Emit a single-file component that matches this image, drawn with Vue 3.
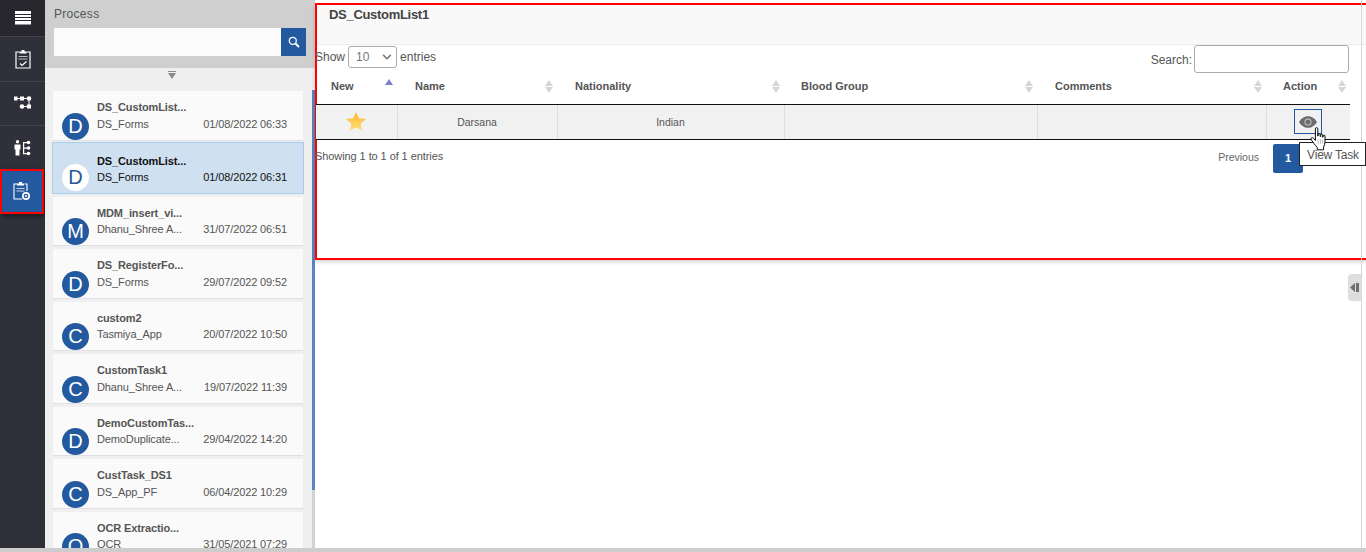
<script setup>
const processes = [
  { letter: 'D', title: 'DS_CustomList...', app: 'DS_Forms', date: '01/08/2022 06:33' },
  { letter: 'D', title: 'DS_CustomList...', app: 'DS_Forms', date: '01/08/2022 06:31', active: true },
  { letter: 'M', title: 'MDM_insert_vi...', app: 'Dhanu_Shree A...', date: '31/07/2022 06:51' },
  { letter: 'D', title: 'DS_RegisterFo...', app: 'DS_Forms', date: '29/07/2022 09:52' },
  { letter: 'C', title: 'custom2', app: 'Tasmiya_App', date: '20/07/2022 10:50' },
  { letter: 'C', title: 'CustomTask1', app: 'Dhanu_Shree A...', date: '19/07/2022 11:39' },
  { letter: 'D', title: 'DemoCustomTas...', app: 'DemoDuplicate...', date: '29/04/2022 14:20' },
  { letter: 'C', title: 'CustTask_DS1', app: 'DS_App_PF', date: '06/04/2022 10:29' },
  { letter: 'O', title: 'OCR Extractio...', app: 'OCR', date: '31/05/2021 07:29' }
]

const columns = ['Name', 'Nationality', 'Blood Group', 'Comments', 'Action']
</script>

<template>
  <div class="page">
    <div class="shell">
      <nav class="rail">
        <div class="rail-top">
          <svg width="16" height="14" viewBox="0 0 16 14"><path fill="#fff" d="M0 0h16v3H0zM0 4h16v2H0zM0 7h16v2H0zM0 10h16v3.500H0z" /></svg>
        </div>
        <div class="rail-item">
          <svg width="16" height="20" viewBox="0 0 16 20" fill="none" stroke="#fff" stroke-width="1.200">
            <path d="M4.500 3H1v16h14V3h-3.500" />
            <path d="M4.500 4.500V2.500H6.500V1h3v1.500h2v2z" fill="#fff" stroke="none" />
            <path d="M3.500 7.500h9M3.500 10h9" stroke="#bbb" />
            <path d="M5 14.500l2 2 4.500-4" />
          </svg>
        </div>
        <div class="rail-item">
          <svg width="18" height="14" viewBox="0 0 18 14" fill="#fff">
            <rect x="0" y="0.500" width="3.500" height="4" />
            <rect x="6" y="0.500" width="4" height="4" />
            <circle cx="15" cy="2.500" r="2.300" />
            <path d="M3 2h4v1H3zM10 2h3v1h-3zM14.500 4h1v5h-1z" />
            <circle cx="8" cy="10.500" r="2.300" />
            <rect x="13" y="8.500" width="4" height="4" />
            <path d="M10 10h4v1h-4z" />
          </svg>
        </div>
        <div class="rail-item">
          <svg width="17" height="16" viewBox="0 0 17 16" fill="#fff">
            <circle cx="3.500" cy="1.800" r="1.700" />
            <path d="M0.500 4.500h6v5H5.500V15.500H1.500V9.500H0.500z" />
            <path d="M9 2.500h1.200v11H9zM9 2h4v1.200H9zM9 7.500h4v1.200H9zM9 13h4v1.200H9z" />
            <circle cx="14.500" cy="2.500" r="1.800" />
            <circle cx="14.500" cy="8" r="1.800" />
            <circle cx="14.500" cy="13.500" r="1.800" />
          </svg>
        </div>
        <div class="rail-item selected">
          <svg width="18" height="20" viewBox="0 0 18 20" fill="none" stroke="#fff" stroke-width="1.100">
            <path d="M4.500 3H1v15h8M11.500 3H14v7" />
            <path d="M4 4.500V2.500H6V1h3v1.500h2v2z" fill="#fff" stroke="none" />
            <path d="M3.500 7.500h8M3.500 10h8" stroke="#c6d4e6" />
            <circle cx="13" cy="15" r="4" fill="#fff" stroke="none" />
            <circle cx="13" cy="15" r="1.700" stroke="#235a9f" stroke-width="1.300" />
          </svg>
        </div>
      </nav>

      <aside class="process">
        <div class="process-head">
          <div class="process-label">Process</div>
          <div class="process-search">
            <input class="process-input" type="text" />
            <button class="process-btn" type="button">
              <svg width="12" height="12" viewBox="0 0 12 12" fill="none" stroke="#fff">
                <circle cx="4.800" cy="4.800" r="3.500" stroke-width="1.300" />
                <path d="M7.500 7.500l3.500 3.500" stroke-width="2" />
              </svg>
            </button>
          </div>
        </div>
        <div class="collapse-row"><span class="collapse-bar"></span><span class="collapse-arrow"></span></div>
        <div class="process-body">
          <ul class="process-list">
            <li v-for="(item, i) in processes" :key="i" class="process-item" :class="{ active: item.active }">
              <span class="avatar">{{ item.letter }}</span>
              <div class="item-text">
                <div class="item-title">{{ item.title }}</div>
                <div class="item-meta">
                  <span>{{ item.app }}</span>
                  <span>{{ item.date }}</span>
                </div>
              </div>
            </li>
          </ul>
          <div class="scroll-track"><div class="scroll-thumb"></div></div>
        </div>
      </aside>

      <main class="content">
        <section class="task-panel">
          <h1 class="task-title">DS_CustomList1</h1>
          <div class="table-tools">
            <label class="length">
              Show
              <span class="length-select">10
                <svg width="10" height="6" viewBox="0 0 11 7" fill="none" stroke="#777" stroke-width="1.800"><path d="M1 1l4.500 4.500L10 1" /></svg>
              </span>
              entries
            </label>
            <label class="search">Search:<input class="search-input" type="text" /></label>
          </div>
          <table class="task-table">
            <colgroup>
              <col style="width: 81px" />
              <col style="width: 160px" />
              <col style="width: 227px" />
              <col style="width: 253px" />
              <col style="width: 229px" />
              <col style="width: 84px" />
            </colgroup>
            <thead>
              <tr>
                <th class="first-head">
                  New
                  <span class="sort-up"></span>
                </th>
                <th v-for="col in columns" :key="col">
                  {{ col }}
                  <span class="sort"><i class="up"></i><i class="down"></i></span>
                </th>
              </tr>
            </thead>
            <tbody>
              <tr>
                <td>
                  <svg class="star" width="20" height="19" viewBox="0 0 20 19">
                    <defs>
                      <linearGradient id="starFill" x1="0" y1="0" x2="0" y2="1">
                        <stop offset="0" stop-color="#fdb92e" />
                        <stop offset="1" stop-color="#fedd7a" />
                      </linearGradient>
                    </defs>
                    <path fill="url(#starFill)" d="M10 0l2.900 6.300 7 .8-5.200 4.700 1.400 6.900L10 15.300l-6.100 3.400 1.400-6.900L.1 7.100l7-.8z" />
                  </svg>
                </td>
                <td>Darsana</td>
                <td>Indian</td>
                <td></td>
                <td></td>
                <td>
                  <span class="view-btn">
                    <svg width="18" height="12" viewBox="0 0 20 13">
                      <path fill="#6d6d6d" d="M10 0c4.500 0 8 3 10 6.500C18 10 14.500 13 10 13S2 10 0 6.500C2 3 5.500 0 10 0z" />
                      <circle cx="10" cy="6.500" r="3.900" fill="#d0d0d0" />
                      <circle cx="10" cy="6.500" r="2.900" fill="#6d6d6d" />
                    </svg>
                  </span>
                </td>
              </tr>
            </tbody>
          </table>
          <div class="table-foot">
            <span class="table-info">Showing 1 to 1 of 1 entries</span>
            <div class="pager">
              <span class="pager-prev">Previous</span>
              <span class="pager-num">1</span>
            </div>
          </div>
          <div class="tip">View Task</div>
          <svg class="hand" width="18" height="24" viewBox="0 0 15 20">
            <path fill="#fff" stroke="#000" stroke-width="0.800" stroke-linejoin="round" d="M4.500 1.500c0-1.300 2-1.300 2 0V7.500h.3V6.300c0-1 1.700-1 1.700 0V8h.4V6.800c0-1 1.600-1 1.600 0V8.500h.4V7.500c0-1 1.600-1 1.600 0v5c0 1.800-.6 3-1.200 4.200v2.300H6V17C4.500 15.300 2.500 13 1 10.500 .3 9.200 1.800 8.200 3 9.500l1.500 1.700z" />
            <path stroke="#777" stroke-width="0.400" d="M6.800 10v4M8.700 10v4M10.600 10v4" />
          </svg>
        </section>
        <div class="side-handle">
          <svg width="9" height="9" viewBox="0 0 9 9"><path fill="#6f6f6f" d="M5 0v9L0 4.500zM6 0h3v9H6z" /></svg>
        </div>
      </main>
    </div>
    <div class="page-bar"></div>
  </div>
</template>

<style scoped>
.page {
  height: 552px;
  display: flex;
  flex-direction: column;
  overflow: hidden;
  font-family: "Liberation Sans", Arial, sans-serif;
  font-size: 12px;
  color: #555;
  background: #fff;
}
.shell {
  flex: 1;
  min-height: 0;
  display: flex;
}
.page-bar {
  height: 4px;
  background: #cdcdcd;
}

/* left rail */
.rail {
  width: 45px;
  flex: none;
  background: #2f3039;
}
.rail-top {
  height: 36px;
  background: #27272d;
  display: flex;
  align-items: center;
  justify-content: center;
}
.rail-item {
  height: 44.500px;
  box-sizing: border-box;
  border-top: 1px solid #42434b;
  display: flex;
  align-items: center;
  justify-content: center;
}
.rail-item.selected {
  height: 44.500px;
  width: 44px;
  margin-top: -0.500px;
  border: 2px solid #f00;
  background: #235a9f;
  box-shadow: 2px 2px 5px rgba(0, 0, 0, 0.5);
}

/* process list */
.process {
  width: 270px;
  flex: none;
  display: flex;
  flex-direction: column;
  background: #efefef;
}
.process-head {
  height: 68px;
  flex: none;
  box-sizing: border-box;
  background: #cfcfcf;
  padding: 8px 9px 0;
}
.process-label {
  font-size: 12px;
  line-height: 13px;
  letter-spacing: 0.3px;
  color: #555;
}
.process-search {
  display: flex;
  margin-top: 7px;
  height: 28px;
}
.process-input {
  flex: 1;
  min-width: 0;
  border: 0;
  padding: 0;
  margin: 0;
  background: #fbfbfb;
}
.process-btn {
  width: 25px;
  border: 0;
  padding: 0;
  background: #235a9f;
  display: flex;
  align-items: center;
  justify-content: center;
}
.collapse-row {
  height: 14px;
  flex: none;
  width: 254px;
  box-sizing: border-box;
  padding-top: 3px;
  display: flex;
  flex-direction: column;
  align-items: center;
}
.collapse-bar {
  width: 8px;
  height: 1px;
  background: #8a8a8a;
  margin-bottom: 1px;
}
.collapse-arrow {
  width: 0;
  height: 0;
  border-left: 4px solid transparent;
  border-right: 4px solid transparent;
  border-top: 6px solid #8a8a8a;
}
.process-body {
  flex: 1;
  min-height: 0;
  display: flex;
  padding-top: 9px;
}
.process-list {
  list-style: none;
  margin: 0 0 0 7px;
  padding: 0 1px;
  width: 250px;
  flex: none;
  overflow: hidden;
}
.process-item {
  height: 48.500px;
  margin-bottom: 3px;
  background: #fafafa;
  border-bottom: 1px solid #dfe0e6;
  display: flex;
  align-items: flex-end;
  padding-left: 9px;
}
.process-item:first-child {
  margin-bottom: 1.500px;
}
.process-item.active {
  background: #cfe0f1;
  border: 1px solid #a9cdec;
  height: 50px;
  margin-left: -1px;
  margin-right: -1px;
  margin-bottom: 2.500px;
  color: #111;
}
.avatar {
  width: 27px;
  height: 27px;
  border-radius: 50%;
  background: #235a9f;
  color: #fff;
  font-size: 20px;
  line-height: 27px;
  text-align: center;
  flex: none;
}
.active .avatar {
  margin-bottom: 2px;
  background: #fff;
  color: #235a9f;
}
.item-text {
  margin-left: 8px;
  width: 190px;
  padding-bottom: 9px;
  font-size: 11px;
  letter-spacing: -0.12px;
}
.item-title {
  font-weight: bold;
  line-height: 13px;
  margin-bottom: 3.500px;
}
.item-meta {
  display: flex;
  justify-content: space-between;
  line-height: 13px;
}
.scroll-track {
  width: 3px;
  margin-left: 8px;
  background: #d2d2d2;
  flex: none;
  margin-top: -1px;
}
.scroll-thumb {
  height: 400px;
  background: #5a85bd;
}

/* main area */
.content {
  flex: 1;
  min-width: 0;
  position: relative;
  background: #fff;
  border-right: 4px solid #fff;
}
.content::after {
  content: "";
  position: absolute;
  top: 0;
  bottom: 0;
  right: 0;
  width: 1px;
  background: #d8d8d8;
  z-index: 2;
}
.task-panel {
  position: relative;
  margin-top: 3px;
  margin-right: -4px;
  height: 257px;
  box-sizing: border-box;
  border: 2px solid #f00;
  border-right: 0;
  box-shadow: 0 2px 4px rgba(0, 0, 0, 0.18);
  background: #fff;
}
.task-title {
  margin: 0;
  height: 40px;
  box-sizing: border-box;
  background: #f9f9f9;
  border-bottom: 1px solid #eeeeee;
  padding: 2px 0 0 12px;
  font-size: 13px;
  line-height: 15px;
  font-weight: bold;
  letter-spacing: -0.3px;
  color: #444;
}
.table-tools {
  display: flex;
  justify-content: space-between;
  padding-right: 17px;
  height: 23px;
  font-size: 12px;
  margin-left: -2px;
}
.length {
  display: flex;
  align-items: center;
  gap: 3px;
  height: 22px;
  padding-top: 1px;
}
.length-select {
  width: 49px;
  height: 22px;
  box-sizing: border-box;
  border: 1px solid #aaa;
  border-radius: 3px;
  padding: 0 4px 0 7px;
  display: flex;
  align-items: center;
  justify-content: space-between;
  color: #777;
}
.search {
  display: flex;
  align-items: flex-start;
  gap: 2px;
  line-height: 30px;
}
.search-input {
  width: 155px;
  height: 28px;
  box-sizing: border-box;
  border: 1px solid #aaa;
  border-radius: 3px;
  margin: 0;
  padding: 0;
  background: #fff;
}
.task-table {
  width: 1034px;
  table-layout: fixed;
  border-collapse: collapse;
  font-size: 11px;
  margin-left: -1px;
}
.task-table th {
  height: 36px;
  box-sizing: border-box;
  border-bottom: 1px solid #111;
  text-align: left;
  padding: 0 0 0 18px;
  font-weight: bold;
  color: #555;
  position: relative;
}
.task-table th.first-head {
  padding-left: 15px;
}
.task-table th:nth-child(4),
.task-table th:last-child {
  padding-left: 17px;
}
.sort-up {
  position: absolute;
  right: 4px;
  top: 11px;
  width: 0;
  height: 0;
  border-left: 4px solid transparent;
  border-right: 4px solid transparent;
  border-bottom: 6px solid #7a7fd0;
}
.sort {
  position: absolute;
  right: 4px;
  top: 12px;
  display: flex;
  flex-direction: column;
  gap: 1px;
}
.sort i {
  display: block;
  width: 0;
  height: 0;
  border-left: 4px solid transparent;
  border-right: 4px solid transparent;
}
.sort .up {
  border-bottom: 6px solid #d6d6d6;
}
.sort .down {
  border-top: 6px solid #d6d6d6;
}
.task-table td {
  height: 35px;
  box-sizing: border-box;
  background: #f1f1f1;
  border-bottom: 1px solid #111;
  border-left: 1px solid #dedede;
  text-align: center;
  padding: 0;
  color: #555;
  font-size: 10.500px;
}
.task-table td:first-child {
  border-left: 0;
}
.star {
  vertical-align: middle;
}
.view-btn {
  display: inline-flex;
  align-items: center;
  justify-content: center;
  width: 28px;
  height: 25px;
  box-sizing: border-box;
  border: 1px solid #235a9f;
  vertical-align: middle;
}
.table-foot {
  display: flex;
  justify-content: space-between;
  align-items: flex-start;
  margin-left: -2px;
  width: 988px;
  padding-top: 4px;
  font-size: 11px;
  line-height: 13px;
}
.table-info {
  padding-top: 6px;
  letter-spacing: -0.08px;
}
.pager {
  display: flex;
  align-items: flex-start;
  gap: 14px;
}
.pager-prev {
  padding-top: 7px;
  font-size: 10.500px;
  color: #666;
}
.pager-num {
  width: 30px;
  height: 29px;
  background: #235a9f;
  color: #fff;
  text-align: center;
  font-weight: bold;
  line-height: 28px;
  border-radius: 2px;
}
.tip {
  position: absolute;
  left: 982px;
  top: 137px;
  width: 67px;
  height: 24px;
  box-sizing: border-box;
  background: #fff;
  border: 1px solid #222;
  color: #555;
  font-size: 12px;
  letter-spacing: -0.2px;
  line-height: 24px;
  padding-left: 1px;
  text-align: center;
  z-index: 3;
}
.hand {
  position: absolute;
  left: 993px;
  top: 122px;
  z-index: 4;
}
.side-handle {
  position: absolute;
  top: 274px;
  right: 1px;
  width: 13px;
  height: 27px;
  background: #dedede;
  border-radius: 4px 0 0 4px;
  display: flex;
  align-items: center;
  justify-content: center;
}
</style>
